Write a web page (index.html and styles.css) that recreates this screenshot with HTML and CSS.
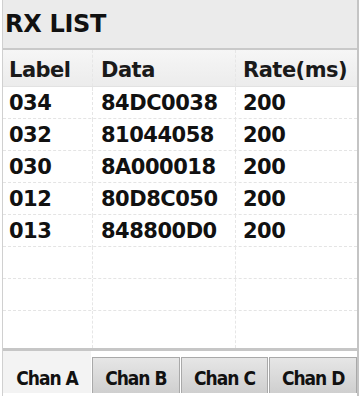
FILE: index.html
```html
<!DOCTYPE html>
<html>
<head>
<meta charset="utf-8">
<link rel="stylesheet" href="styles.css">
</head>
<body>
<div class="panel">
  <div class="title">RX LIST</div>
  <div class="table">
    <div class="row head"><span class="c1">Label</span><span class="c2">Data</span><span class="c3">Rate(ms)</span></div>
    <div class="row"><span class="c1">034</span><span class="c2">84DC0038</span><span class="c3">200</span></div>
    <div class="row"><span class="c1">032</span><span class="c2">81044058</span><span class="c3">200</span></div>
    <div class="row"><span class="c1">030</span><span class="c2">8A000018</span><span class="c3">200</span></div>
    <div class="row"><span class="c1">012</span><span class="c2">80D8C050</span><span class="c3">200</span></div>
    <div class="row"><span class="c1">013</span><span class="c2">848800D0</span><span class="c3">200</span></div>
    <div class="row"><span class="c1"></span><span class="c2"></span><span class="c3"></span></div>
    <div class="row"><span class="c1"></span><span class="c2"></span><span class="c3"></span></div>
    <div class="row last"><span class="c1"></span><span class="c2"></span><span class="c3"></span></div>
  </div>
  <div class="tabs">
    <div class="tab active">Chan A</div>
    <div class="tab">Chan B</div>
    <div class="tab">Chan C</div>
    <div class="tab">Chan D</div>
  </div>
</div>
</body>
</html>
```
FILE: styles.css
```css
html, body {
  margin: 0;
  padding: 0;
  background: #ffffff;
}
body {
  width: 361px;
  height: 396px;
  overflow: hidden;
  font-family: "DejaVu Sans", "Open Sans", sans-serif;
  color: #111111;
}
.panel {
  margin: 0 2px 0 2px;
  height: 396px;
  display: flex;
  flex-direction: column;
  border-left: 1px solid #d0d0d0;
  border-right: 2px solid #c4c4c4;
  box-sizing: border-box;
}
.title {
  height: 50px;
  flex: none;
  background: #ebebeb;
  font-weight: 700;
  font-size: 24px;
  line-height: 48px;
  padding-left: 2px;
  letter-spacing: -0.3px;
  border-bottom: 2px solid #c9c9c9;
  box-sizing: border-box;
}
.table {
  height: 301px;
  flex: none;
  display: flex;
  flex-direction: column;
  border-bottom: 3px solid #c6c6c6;
  box-sizing: border-box;
}
.row {
  display: grid;
  grid-template-columns: 90px 143px 1fr;
  height: 32px;
  flex: none;
  border-bottom: 1px dashed #e4e4e4;
  box-sizing: border-box;
  font-size: 21px;
  letter-spacing: -0.5px;
  font-weight: 700;
  line-height: 33px;
}
.row.head {
  height: 37px;
  line-height: 41px;
  background: linear-gradient(#f6f6f6, #ececec);
  border-bottom: 1px solid #e2e2e2;
  font-weight: 700;
  color: #1a1a1a;
}
.row.last {
  border-bottom: none;
  flex: 1;
}
.row span {
  padding-left: 6px;
  border-right: 1px dashed #e6e6e6;
}
.row span.c3 {
  border-right: none;
  padding-left: 7px;
}
.row .c2 {
  padding-left: 8px;
}
.tabs {
  flex: 1;
  display: grid;
  grid-template-columns: 88px 1fr 1fr 1fr;
  align-items: start;
  gap: 1px;
  padding-top: 6px;
  box-sizing: border-box;
  background: #ffffff;
}
.tab {
  height: 36px;
  box-sizing: border-box;
  background: linear-gradient(#e6e6e6, #cfcfcf);
  border: 1px solid #a9a9a9;
  border-bottom: none;
  font-family: "DejaVu Sans Condensed", "DejaVu Sans", sans-serif;
  font-stretch: condensed;
  font-size: 19px;
  font-weight: 700;
  letter-spacing: -1px;
  text-align: center;
  line-height: 41px;
}
.tab.active {
  background: #f3f3f3;
  border-color: #f3f3f3;
  height: 42px;
  margin-top: -6px;
  line-height: 53px;
}
```
